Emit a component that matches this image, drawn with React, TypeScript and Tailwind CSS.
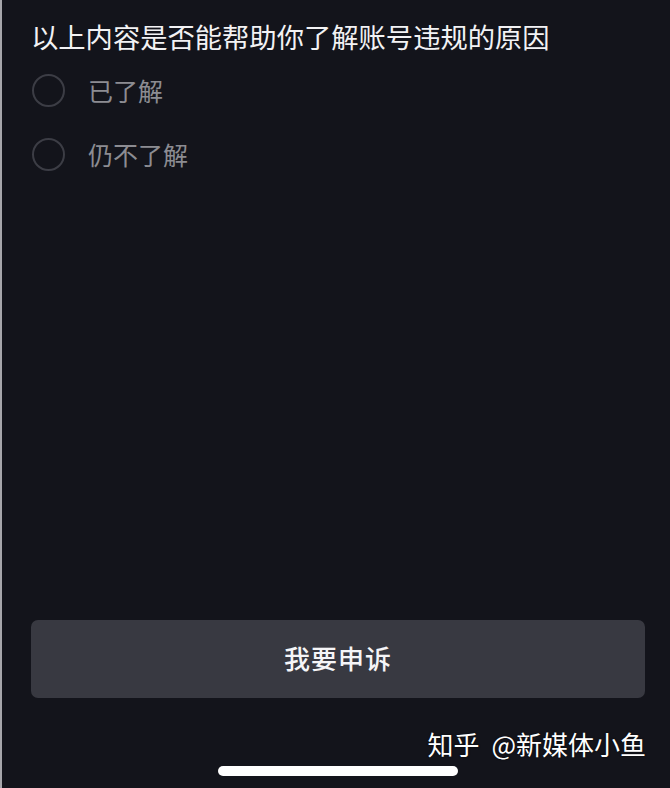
import React from "react";

const font = { fontFamily: '"Noto Sans CJK SC", "Noto Sans", sans-serif' };

export default function App() {
  return (
    <div
      className="relative flex h-[788px] w-[670px] overflow-hidden bg-[#13141b]"
      style={font}
    >
      <div className="w-[2px] shrink-0 bg-[#a6a6ab]" />
      <div className="flex flex-1 flex-col">
        <div className="pl-[29px] pt-[17px] text-[27.3px] leading-[38px] text-[#f2f2f4]">
          以上内容是否能帮助你了解账号违规的原因
        </div>
        <div className="mt-[19px] flex flex-col gap-[31px] pl-[30px]">
          {["已了解", "仍不了解"].map((t) => (
            <div key={t} className="flex h-[33px] items-center gap-[23px]">
              <div className="h-[33px] w-[33px] rounded-full border-2 border-[#3c3d45]" />
              <span className="text-[25px] leading-[33px] text-[#8c8c92]">{t}</span>
            </div>
          ))}
        </div>
        <div className="flex-1" />
        <div className="ml-[29px] mr-[25px] flex h-[78px] items-center justify-center rounded-[7px] bg-[#383941]">
          <span className="mt-[-4px] text-[26px] font-medium tracking-[1px] text-[#f5f5f7]">我要申诉</span>
        </div>
        <div className="flex justify-end gap-[12px] pr-[24px] pt-[30px] text-[26px] leading-[32px] text-white [text-shadow:0_0_2px_rgba(0,0,0,0.8)]">
          <span>知乎</span>
          <span>@新媒体小鱼</span>
        </div>
        <div className="flex justify-center pb-[12px] pt-[6px]">
          <div className="ml-[4px] h-[10px] w-[240px] rounded-full bg-white" />
        </div>
      </div>
    </div>
  );
}
